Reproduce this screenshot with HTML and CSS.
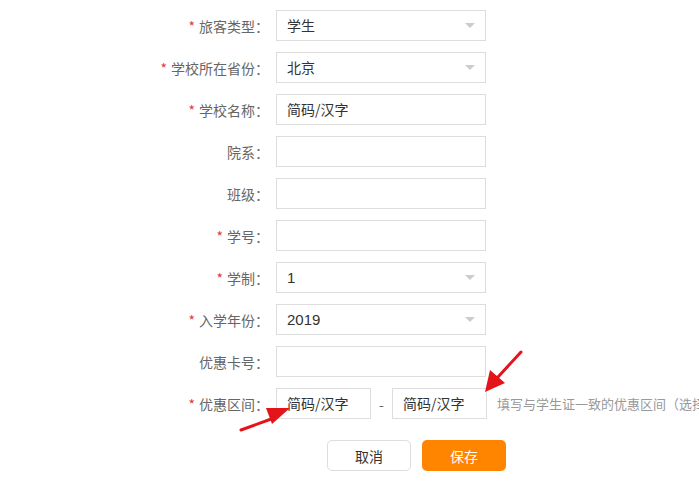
FILE: index.html
```html
<!DOCTYPE html>
<html lang="zh-CN">
<head>
    <meta charset="UTF-8">
    <title>学生信息</title>
    <link rel="stylesheet" href="styles.css">
</head>
<body>
    <div class="form">
        <div class="row">
            <label class="label"><span class="req">*</span>旅客类型：</label>
            <div class="field select">学生<i class="caret"></i></div>
        </div>
        <div class="row">
            <label class="label"><span class="req">*</span>学校所在省份：</label>
            <div class="field select">北京<i class="caret"></i></div>
        </div>
        <div class="row">
            <label class="label"><span class="req">*</span>学校名称：</label>
            <div class="field">简码/汉字</div>
        </div>
        <div class="row">
            <label class="label">院系：</label>
            <div class="field"></div>
        </div>
        <div class="row">
            <label class="label">班级：</label>
            <div class="field"></div>
        </div>
        <div class="row">
            <label class="label"><span class="req">*</span>学号：</label>
            <div class="field"></div>
        </div>
        <div class="row">
            <label class="label"><span class="req">*</span>学制：</label>
            <div class="field select num">1<i class="caret"></i></div>
        </div>
        <div class="row">
            <label class="label"><span class="req">*</span>入学年份：</label>
            <div class="field select num">2019<i class="caret"></i></div>
        </div>
        <div class="row">
            <label class="label">优惠卡号：</label>
            <div class="field"></div>
        </div>
        <div class="row">
            <label class="label"><span class="req">*</span>优惠区间：</label>
            <div class="field short">简码/汉字</div>
            <span class="dash">-</span>
            <div class="field short">简码/汉字</div>
            <span class="hint">填写与学生证一致的优惠区间（选择</span>
        </div>
        <div class="actions">
            <button class="btn btn-cancel">取消</button>
            <button class="btn btn-save">保存</button>
        </div>
    </div>

    <!-- 标注箭头 -->
    <svg class="marks" width="699" height="486" viewBox="0 0 699 486">
        <line x1="241" y1="430" x2="274" y2="418" stroke="#e4141b" stroke-width="3" stroke-linecap="round"/>
        <polygon points="290,408 266,408 272,424" fill="#e4141b"/>
        <line x1="521" y1="352" x2="498" y2="377" stroke="#e4141b" stroke-width="3" stroke-linecap="round"/>
        <polygon points="485,392 490,370 505,383" fill="#e4141b"/>
    </svg>
</body>
</html>
```
FILE: styles.css
```css
body {
    margin: 0;
    font-family: "Noto Sans CJK SC", "Liberation Sans", sans-serif;
    font-size: 14px;
    color: #333;
    background: #fff;
    overflow: hidden;
}

.form {
    padding-top: 10px;
}

.row {
    display: flex;
    align-items: center;
    height: 31px;
    margin-bottom: 11px;
    white-space: nowrap;
}

.row > * {
    flex-shrink: 0;
}

.label {
    width: 269px;
    padding-right: 7px;
    text-align: right;
    color: #666;
}

.req {
    color: #e4393c;
    margin-right: 4px;
}

.field {
    position: relative;
    box-sizing: border-box;
    width: 210px;
    height: 31px;
    line-height: 29px;
    padding-left: 10px;
    border: 1px solid #ddd;
    color: #333;
}

.num {
    font-family: "Liberation Sans", sans-serif;
    font-size: 15px;
}

.caret {
    position: absolute;
    right: 10px;
    top: 12px;
    width: 0;
    height: 0;
    border-left: 5px solid transparent;
    border-right: 5px solid transparent;
    border-top: 5px solid #ccc;
}

.short {
    width: 95px;
}

.dash {
    width: 21px;
    text-align: center;
    color: #666;
}

.hint {
    margin-left: 10px;
    font-size: 13px;
    color: #999;
}

.actions {
    display: flex;
    gap: 11px;
    padding-left: 327px;
    margin-top: 21px;
}

.btn {
    width: 84px;
    height: 31px;
    border-radius: 5px;
    font-family: inherit;
    font-size: 14px;
    cursor: pointer;
}

.btn-cancel {
    background: #fff;
    border: 1px solid #ddd;
    color: #333;
}

.btn-save {
    background: #ff8400;
    border: none;
    color: #fff;
}

.marks {
    position: absolute;
    left: 0;
    top: 0;
    pointer-events: none;
}
```
